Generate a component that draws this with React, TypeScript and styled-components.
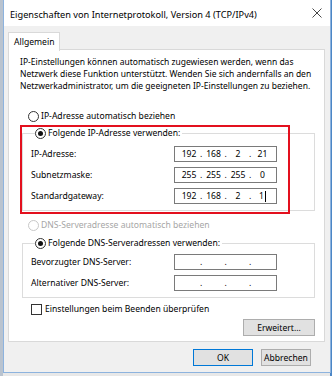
import React from "react";
import styled, { createGlobalStyle } from "styled-components";

const GlobalStyle = createGlobalStyle`
  html, body { margin: 0; padding: 0; }
  body {
    width: 332px;
    height: 376px;
    overflow: hidden;
    background: #e9e9e9;
    font-family: "Noto Sans", "Open Sans", "DejaVu Sans", sans-serif;
    color: #000;
  }
  * { box-sizing: border-box; }
`;

const Desktop = styled.div`
  width: 332px;
  height: 376px;
  display: flex;
  align-items: flex-start;
  padding-left: 3px;
  background:
    linear-gradient(to right, #b9c3cf 0 3px, transparent 3px),
    linear-gradient(to left, #4b86c6 0 2px, transparent 2px),
    #e8e8e8;
`;

const Window = styled.div`
  width: 328px;
  height: 373px;
  display: flex;
  flex-direction: column;
  border: 1px solid #8db3de;
  border-top: none;
  background: #f0f0f0;
`;

const TitleBar = styled.div`
  height: 26px;
  flex: none;
  background: #fff;
  display: flex;
  align-items: center;
  justify-content: space-between;
  padding: 0 8px 0 6px;
`;

const Title = styled.div`
  font-size: 9.2px;
  color: #000;
  padding-top: 2px;
  white-space: nowrap;
`;

const Body = styled.div`
  flex: 1;
  display: flex;
  flex-direction: column;
  padding: 6px 5px 0 4px;
`;

const TabStrip = styled.div`
  display: flex;
  height: 18px;
  margin-bottom: -1px;
  position: relative;
  z-index: 1;
`;

const Tab = styled.div`
  height: 19px;
  padding: 0 5px;
  display: flex;
  align-items: center;
  font-size: 8.6px;
  background: #fff;
  border: 1px solid #d9d9d9;
  border-bottom: none;
`;

const Panel = styled.div`
  height: 293px;
  flex: none;
  background: #fff;
  border: 1px solid #d9d9d9;
  display: flex;
  flex-direction: column;
  padding: 6px 9px 0 11px;
  overflow: hidden;
`;

const Intro = styled.p`
  margin: 0;
  font-size: 8.5px;
  line-height: 12px;
  white-space: nowrap;
`;

const OptionRow = styled.div<{ $top: number; $left?: number; $disabled?: boolean }>`
  display: flex;
  align-items: center;
  gap: 2px;
  height: 14px;
  margin-top: ${(p) => p.$top}px;
  margin-left: ${(p) => p.$left ?? 8}px;
  font-size: 8.6px;
  white-space: nowrap;
  color: ${(p) => (p.$disabled ? "#a6a6a6" : "#000")};
`;

const Radio = styled.span<{ $checked?: boolean; $disabled?: boolean }>`
  width: 11px;
  height: 11px;
  border-radius: 50%;
  border: 1px solid ${(p) => (p.$disabled ? "#c8c8c8" : "#333")};
  background: #fff;
  display: flex;
  align-items: center;
  justify-content: center;
  flex: none;
  &::after {
    content: "";
    width: 5px;
    height: 5px;
    border-radius: 50%;
    background: ${(p) => (p.$checked ? "#111" : "transparent")};
  }
`;

const CheckBox = styled.span`
  width: 11px;
  height: 11px;
  border: 1px solid #333;
  background: #fff;
  flex: none;
  margin-right: 1px;
`;

const GroupWrap = styled.div<{ $top: number }>`
  position: relative;
  margin: ${(p) => p.$top}px 0 0 2px;
`;

const Group = styled.fieldset<{ $padTop: number; $padBottom: number }>`
  margin: 0;
  border: 1px solid #dcdcdc;
  padding: ${(p) => p.$padTop}px 0 ${(p) => p.$padBottom}px 8px;
  display: flex;
  flex-direction: column;
  gap: 5px;
  min-width: 0;
`;

const Legend = styled.legend`
  padding: 0 2px 0 0;
  margin-left: 4px;
  display: flex;
  align-items: center;
  gap: 2px;
  height: 14px;
  font-size: 8.6px;
  white-space: nowrap;
  background: #fff;
`;

const Highlight = styled.div`
  position: absolute;
  left: -2px;
  top: -1px;
  right: 25px;
  bottom: -3px;
  border: 2px solid #e3101e;
  pointer-events: none;
`;

const FieldRow = styled.div`
  display: grid;
  grid-template-columns: 143px 103px;
  align-items: center;
  height: 16px;
  font-size: 8.6px;
  white-space: nowrap;
`;

const IpBox = styled.div`
  width: 103px;
  height: 16px;
  border: 1px solid #7a7a7a;
  background: #fff;
  display: flex;
  align-items: center;
  padding: 0 3px 0 4px;
  font-size: 8.6px;
`;

const Octet = styled.span`
  width: 20px;
  display: flex;
  justify-content: center;
  align-items: center;
`;

const Dot = styled.span`
  width: 4.5px;
  text-align: center;
`;

const Caret = styled.span`
  width: 1px;
  height: 11px;
  background: #000;
  margin-left: 1px;
`;

const ButtonRow = styled.div<{ $pad: number; $top: number }>`
  display: flex;
  justify-content: flex-end;
  gap: 8px;
  margin-top: ${(p) => p.$top}px;
  padding-right: ${(p) => p.$pad}px;
`;

const Button = styled.div<{ $w: number; $primary?: boolean }>`
  width: ${(p) => p.$w}px;
  height: 17px;
  display: flex;
  align-items: center;
  justify-content: center;
  font-size: 8.6px;
  white-space: nowrap;
  background: #e1e1e1;
  border: ${(p) => (p.$primary ? "1.5px solid #0078d7" : "1px solid #adadad")};
`;

const Ip: React.FC<{ parts: string[]; caret?: boolean }> = ({ parts, caret }) => (
  <IpBox>
    {parts.map((part, i) => (
      <React.Fragment key={i}>
        {i > 0 && <Dot>.</Dot>}
        <Octet>
          {part}
          {caret && i === 3 && <Caret />}
        </Octet>
      </React.Fragment>
    ))}
  </IpBox>
);

const CloseIcon = () => (
  <svg width="10" height="10" viewBox="0 0 10 10">
    <path d="M0.5 0.5 L9.5 9.5 M9.5 0.5 L0.5 9.5" stroke="#333" strokeWidth="0.9" fill="none" />
  </svg>
);

export default function App() {
  return (
    <>
      <GlobalStyle />
      <Desktop>
        <Window>
          <TitleBar>
            <Title>Eigenschaften von Internetprotokoll, Version 4 (TCP/IPv4)</Title>
            <CloseIcon />
          </TitleBar>
          <Body>
            <TabStrip>
              <Tab>Allgemein</Tab>
            </TabStrip>
            <Panel>
              <Intro>
                IP-Einstellungen können automatisch zugewiesen werden, wenn das
                <br />
                Netzwerk diese Funktion unterstützt. Wenden Sie sich andernfalls an den
                <br />
                Netzwerkadministrator, um die geeigneten IP-Einstellungen zu beziehen.
              </Intro>

              <OptionRow $top={17}>
                <Radio />
                IP-Adresse automatisch beziehen
              </OptionRow>

              <GroupWrap $top={3}>
                <Group $padTop={6} $padBottom={6}>
                  <Legend>
                    <Radio $checked />
                    Folgende IP-Adresse verwenden:
                  </Legend>
                  <FieldRow>
                    <span>IP-Adresse:</span>
                    <Ip parts={["192", "168", "2", "21"]} />
                  </FieldRow>
                  <FieldRow>
                    <span>Subnetzmaske:</span>
                    <Ip parts={["255", "255", "255", "0"]} />
                  </FieldRow>
                  <FieldRow>
                    <span>Standardgateway:</span>
                    <Ip parts={["192", "168", "2", "1"]} caret />
                  </FieldRow>
                </Group>
                <Highlight />
              </GroupWrap>

              <OptionRow $top={7} $disabled>
                <Radio $disabled />
                DNS-Serveradresse automatisch beziehen
              </OptionRow>

              <GroupWrap $top={4}>
                <Group $padTop={4} $padBottom={6}>
                  <Legend>
                    <Radio $checked />
                    Folgende DNS-Serveradressen verwenden:
                  </Legend>
                  <FieldRow>
                    <span>Bevorzugter DNS-Server:</span>
                    <Ip parts={["", "", "", ""]} />
                  </FieldRow>
                  <FieldRow>
                    <span>Alternativer DNS-Server:</span>
                    <Ip parts={["", "", "", ""]} />
                  </FieldRow>
                </Group>
              </GroupWrap>

              <OptionRow $top={4} $left={11}>
                <CheckBox />
                Einstellungen beim Beenden überprüfen
              </OptionRow>

              <ButtonRow $pad={0} $top={3}>
                <Button $w={72}>Erweitert...</Button>
              </ButtonRow>
            </Panel>

            <ButtonRow $pad={14} $top={7}>
              <Button $w={60} $primary>
                OK
              </Button>
              <Button $w={50}>Abbrechen</Button>
            </ButtonRow>
          </Body>
        </Window>
      </Desktop>
    </>
  );
}
